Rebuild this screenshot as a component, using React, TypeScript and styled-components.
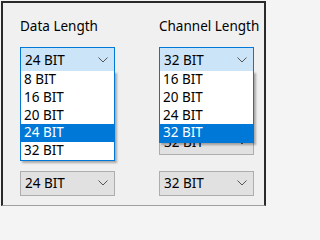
import React from 'react';
import styled, { createGlobalStyle } from 'styled-components';

const GlobalStyle = createGlobalStyle`
  html, body {
    margin: 0;
    padding: 0;
    background: #f4f4f4;
  }
  body {
    font-family: "Noto Sans", "Open Sans", sans-serif;
  }
`;

const Frame = styled.div`
  box-sizing: border-box;
  width: 265px;
  height: 205px;
  margin: 1px 0 0 1px;
  background: #f0f0f0;
  border-top: 2px solid #2a2a2a;
  border-left: 2px solid #2a2a2a;
  border-right: 2px solid #2a2a2a;
  border-bottom: 1px solid #a0a0a0;
  padding: 14px 0 0 17px;
  display: flex;
  gap: 44px;
`;

const Column = styled.div`
  width: 95px;
  display: flex;
  flex-direction: column;
`;

const Label = styled.div`
  font-size: 13.5px;
  line-height: 18px;
  color: #000;
  white-space: nowrap;
  margin-bottom: 12px;
`;

const Stack = styled.div`
  display: flex;
  flex-direction: column;
  gap: 16.3px;
`;

const Combo = styled.div<{ $open?: boolean }>`
  position: relative;
  box-sizing: border-box;
  height: 25px;
  display: flex;
  align-items: center;
  justify-content: space-between;
  padding: 0 6px 0 4px;
  font-size: 13.5px;
  color: #000;
  background: ${p => (p.$open ? '#cce4f7' : '#e1e1e1')};
  border: 1px solid ${p => (p.$open ? '#0078d7' : '#adadad')};
  z-index: ${p => (p.$open ? 2 : 0)};
`;

const Chevron = () => (
  <svg width="10" height="6" viewBox="0 0 10 6">
    <polyline points="0.5,0.5 5,5 9.5,0.5" fill="none" stroke="#555" strokeWidth="1" />
  </svg>
);

const DropList = styled.ul`
  position: absolute;
  top: 100%;
  left: -1px;
  right: -1px;
  margin: 0;
  padding: 0;
  list-style: none;
  background: #fff;
  border: 1px solid #0078d7;
  border-top: none;
  box-shadow: 2px 2px 2px rgba(0, 0, 0, 0.3);
`;

const Item = styled.li<{ $selected?: boolean }>`
  height: 17.75px;
  line-height: 17.75px;
  padding-left: 3px;
  font-size: 13.5px;
  color: ${p => (p.$selected ? '#fff' : '#000')};
  background: ${p => (p.$selected ? '#0078d7' : 'transparent')};
`;

type ColumnData = {
  label: string;
  values: string[];
  options: string[];
};

// rows hidden entirely under an open list keep an empty value
const columns: ColumnData[] = [
  {
    label: 'Data Length',
    values: ['24 BIT', '', '', '24 BIT'],
    options: ['8 BIT', '16 BIT', '20 BIT', '24 BIT', '32 BIT'],
  },
  {
    label: 'Channel Length',
    values: ['32 BIT', '', '32 BIT', '32 BIT'],
    options: ['16 BIT', '20 BIT', '24 BIT', '32 BIT'],
  },
];

const App: React.FC = () => (
  <>
    <GlobalStyle />
    <Frame>
      {columns.map(col => (
        <Column key={col.label}>
          <Label>{col.label}</Label>
          <Stack>
            {col.values.map((v, i) => (
              <Combo key={i} $open={i === 0}>
                <span>{v}</span>
                <Chevron />
                {i === 0 && (
                  <DropList>
                    {col.options.map(o => (
                      <Item key={o} $selected={o === v}>{o}</Item>
                    ))}
                  </DropList>
                )}
              </Combo>
            ))}
          </Stack>
        </Column>
      ))}
    </Frame>
  </>
);

export default App;
